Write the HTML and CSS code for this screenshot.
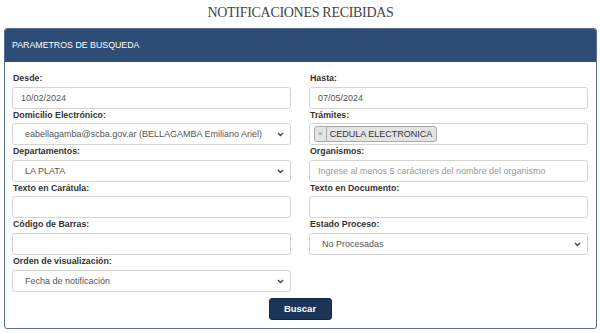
FILE: index.html
```html
<!DOCTYPE html>
<html lang="es">
<head>
<meta charset="UTF-8" />
<meta name="viewport" content="width=device-width, initial-scale=1" />
<title>Notificaciones Recibidas</title>
<link rel="stylesheet" href="styles.css">
</head>
<body>
  <h1 class="title">NOTIFICACIONES RECIBIDAS</h1>
  <div class="panel">
    <div class="panel-heading">PARAMETROS DE BUSQUEDA</div>
    <form class="panel-body" id="filtroForm">
      <div class="grid">
        <div class="field">
          <label for="desde">Desde:</label>
          <input type="text" id="desde" value="10/02/2024" />
        </div>
        <div class="field">
          <label for="hasta">Hasta:</label>
          <input type="text" id="hasta" value="07/05/2024" />
        </div>

        <div class="field">
          <label for="domicilio">Domicilio Electrónico:</label>
          <div class="select-wrap">
            <select id="domicilio">
              <option>eabellagamba@scba.gov.ar (BELLAGAMBA Emiliano Ariel)</option>
            </select>
            <svg class="chevron" width="7" height="5" viewBox="0 0 7 5"><path d="M1 1l2.5 2.5L6 1" fill="none" stroke="#444" stroke-width="1.4"/></svg>
          </div>
        </div>
        <div class="field">
          <label>Trámites:</label>
          <div class="multi">
            <span class="tag"><span class="tag-x">×</span>CEDULA ELECTRONICA</span>
          </div>
        </div>

        <div class="field">
          <label for="departamento">Departamentos:</label>
          <div class="select-wrap">
            <select id="departamento">
              <option>LA PLATA</option>
            </select>
            <svg class="chevron" width="7" height="5" viewBox="0 0 7 5"><path d="M1 1l2.5 2.5L6 1" fill="none" stroke="#444" stroke-width="1.4"/></svg>
          </div>
        </div>
        <div class="field">
          <label for="organismo">Organismos:</label>
          <input type="text" id="organismo" placeholder="Ingrese al menos 5 carácteres del nombre del organismo" />
        </div>

        <div class="field">
          <label for="caratula">Texto en Carátula:</label>
          <input type="text" id="caratula" />
        </div>
        <div class="field">
          <label for="documento">Texto en Documento:</label>
          <input type="text" id="documento" />
        </div>

        <div class="field">
          <label for="barras">Código de Barras:</label>
          <input type="text" id="barras" />
        </div>
        <div class="field">
          <label for="estado">Estado Proceso:</label>
          <div class="select-wrap">
            <select id="estado">
              <option>No Procesadas</option>
            </select>
            <svg class="chevron" width="7" height="5" viewBox="0 0 7 5"><path d="M1 1l2.5 2.5L6 1" fill="none" stroke="#444" stroke-width="1.4"/></svg>
          </div>
        </div>

        <div class="field">
          <label for="orden">Orden de visualización:</label>
          <div class="select-wrap">
            <select id="orden">
              <option>Fecha de notificación</option>
            </select>
            <svg class="chevron" width="7" height="5" viewBox="0 0 7 5"><path d="M1 1l2.5 2.5L6 1" fill="none" stroke="#444" stroke-width="1.4"/></svg>
          </div>
        </div>
      </div>

      <div class="actions">
        <button type="submit">Buscar</button>
      </div>
    </form>
  </div>
</body>
</html>
```

FILE: styles.css
```css
body {
  margin: 0;
  padding: 0 3px 0 4px;
  font-family: "Liberation Sans", Arial, sans-serif;
  background: #fff;
  color: #333;
}
.title {
  margin: 0;
  height: 28px;
  line-height: 26px;
  text-align: center;
  font-family: "Liberation Serif", "Times New Roman", serif;
  font-weight: normal;
  font-size: 14px;
  letter-spacing: -0.3px;
  color: #444;
}
.panel {
  border: 1px solid #56708f;
  border-radius: 3px;
  overflow: hidden;
}
.panel-heading {
  background: #2d4d76;
  color: #fff;
  font-size: 8.8px;
  height: 33px;
  line-height: 33px;
  padding: 0 7px;
}
.panel-body {
  padding: 10px 8px 8px 7px;
}
.grid {
  display: grid;
  grid-template-columns: 1fr 1fr;
  column-gap: 18px;
}
.field label {
  display: block;
  font-size: 8.8px;
  font-weight: 700;
  line-height: 12.6px;
  margin-bottom: 2px;
  padding-left: 1px;
}
input[type=text], select, .multi {
  display: block;
  width: 100%;
  box-sizing: border-box;
  height: 22px;
  border: 1px solid #d4d4d4;
  border-radius: 3px;
  background: #fff;
  font-family: inherit;
  font-size: 9px;
  color: #555;
  outline: none;
}
input[type=text] {
  padding: 0 8px;
}
input::placeholder {
  color: #999;
}
.select-wrap {
  position: relative;
}
select {
  appearance: none;
  -webkit-appearance: none;
  padding: 0 20px 0 12px;
}
.chevron {
  position: absolute;
  right: 7px;
  top: 9px;
}
.multi {
  padding: 2px 4px;
}
.tag {
  display: inline-flex;
  align-items: center;
  height: 14px;
  border: 1px solid #aaa;
  border-radius: 3px;
  background: #e4e4e4;
  color: #333;
  font-size: 9px;
  padding-right: 4px;
}
.tag-x {
  color: #888;
  font-size: 8px;
  padding: 0 3px;
  border-right: 1px solid #aaa;
  margin-right: 3px;
  line-height: 14px;
}
.actions {
  text-align: center;
  margin-top: 6px;
}
button {
  width: 63px;
  height: 22px;
  border: 1px solid #15284a;
  border-radius: 3px;
  background: #1e355a;
  color: #fff;
  font-family: inherit;
  font-weight: 700;
  font-size: 9.5px;
  cursor: pointer;
}
```
